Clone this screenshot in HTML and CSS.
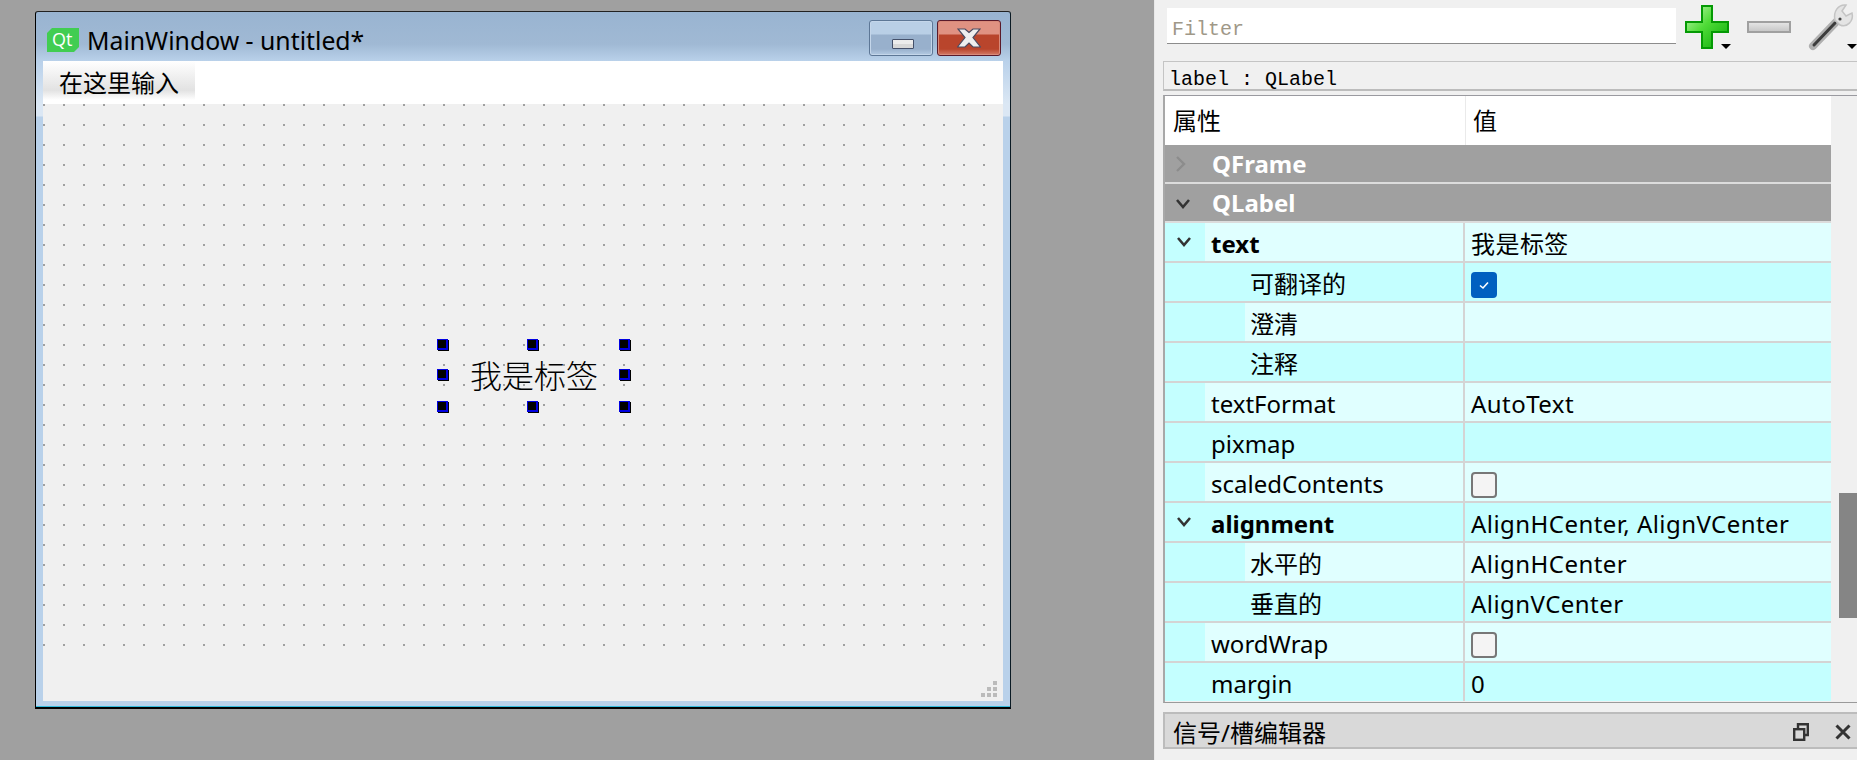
FILE: index.html
```html
<!DOCTYPE html>
<html lang="en">
<head>
    <meta charset="UTF-8">
    <meta name="viewport" content="width=device-width, initial-scale=1.0">
    <title>Qt Designer</title>
    <link rel="stylesheet" href="styles.css">
</head>
<body>

    <!-- Form editor side -->
    <main class="mdi">
        <div class="window">
            <div class="titlebar">
                <svg class="qt-logo" width="32" height="24" viewBox="0 0 32 24">
                    <polygon points="5,0 32,0 32,19 27,24 0,24 0,5" fill="#41cd52"/>
                    <text x="5" y="18" class="qt-text">Qt</text>
                </svg>
                <span class="title">MainWindow - untitled*</span>
                <div class="winbtn min"><span class="min-glyph"></span></div>
                <div class="winbtn close">
                    <svg width="24" height="20" viewBox="0 0 24 20">
                        <polygon points="1,1 8,1 12,4.5 16,1 23,1 16,9.5 23.5,19 16,19 12,15 8,19 0.5,19 8,9.5" fill="#eeeeee" stroke="#4a4a60" stroke-width="1.2"/>
                    </svg>
                </div>
            </div>
            <div class="client">
                <div class="menubar">
                    <div class="menuitem">在这里输入</div>
                </div>
                <div class="canvas">
                    <div class="dots">
                        <div class="label">我是标签</div>
                        <i class="handle h-tl"></i><i class="handle h-tc"></i><i class="handle h-tr"></i>
                        <i class="handle h-ml"></i><i class="handle h-mr"></i>
                        <i class="handle h-bl"></i><i class="handle h-bc"></i><i class="handle h-br"></i>
                    </div>
                    <div class="statusbar">
                        <svg width="16" height="16" viewBox="0 0 16 16" fill="#bbbbbb">
                            <rect x="12" y="0" width="4" height="4"/>
                            <rect x="6" y="6" width="4" height="4"/>
                            <rect x="12" y="6" width="4" height="4"/>
                            <rect x="0" y="12" width="4" height="4"/>
                            <rect x="6" y="12" width="4" height="4"/>
                            <rect x="12" y="12" width="4" height="4"/>
                        </svg>
                    </div>
                </div>
            </div>
        </div>
    </main>

    <!-- Property editor side -->
    <aside class="panel">
        <div class="toolbar">
            <div class="filter">Filter</div>
            <div class="tool tool-plus">
                <svg width="44" height="44" viewBox="0 0 44 44">
                    <defs>
                        <linearGradient id="plusFill" x1="0" y1="0" x2="1" y2="1">
                            <stop offset="0" stop-color="#c8f8b8"/>
                            <stop offset="0.45" stop-color="#50dc38"/>
                            <stop offset="1" stop-color="#08a808"/>
                        </linearGradient>
                    </defs>
                    <polygon points="17,1 27,1 27,17 43,17 43,27 27,27 27,43 17,43 17,27 1,27 1,17 17,17" fill="url(#plusFill)" stroke="#049a04" stroke-width="2"/>
                </svg>
                <i class="drop"></i>
            </div>
            <div class="tool tool-minus"><span class="minus"></span></div>
            <div class="tool tool-wrench">
                <svg width="48" height="48" viewBox="0 0 48 48">
                    <path d="M6 43 L31 17" stroke="#b0b0b0" stroke-width="8" stroke-linecap="round"/>
                    <path d="M7 42 L28 20" stroke="#3c3c3c" stroke-width="3" stroke-linecap="round"/>
                    <path d="M28 17 C26 9 31 1 39 2 L35 8 L39 13 L45 10 C47 18 40 25 33 22 Z" fill="#e4e4e4" stroke="#c4c4c4" stroke-width="1.5"/>
                    <circle cx="33" cy="16" r="1.6" fill="#444"/>
                </svg>
                <i class="drop"></i>
            </div>
        </div>

        <div class="objbar">label : QLabel</div>

        <div class="tablewrap">
            <div class="table">
                <div class="thead">
                    <div class="th-name">属性</div>
                    <div class="th-value">值</div>
                </div>
                <div class="group">
                    <svg class="chev" width="12" height="20" viewBox="0 0 12 20"><path d="M2 3 L9 10 L2 17" fill="none" stroke="#8c8c8c" stroke-width="2.4"/></svg>
                    QFrame
                </div>
                <div class="group">
                    <svg class="chev chev-down" width="16" height="12" viewBox="0 0 16 12"><path d="M2 2 L8 9 L14 2" fill="none" stroke="#333" stroke-width="2.6"/></svg>
                    QLabel
                </div>

                <div class="row light">
                    <div class="indent">
                        <svg width="16" height="12" viewBox="0 0 16 12"><path d="M2 2 L8 9 L14 2" fill="none" stroke="#333" stroke-width="2.6"/></svg>
                    </div>
                    <div class="name bold">text</div>
                    <div class="value">我是标签</div>
                </div>
                <div class="row dark">
                    <div class="indent sub"></div>
                    <div class="name">可翻译的</div>
                    <div class="value">
                        <span class="check on">
                            <svg width="14" height="12" viewBox="0 0 14 12"><path d="M3 6.5 L6 9 L11 3.5" fill="none" stroke="#fff" stroke-width="1.6"/></svg>
                        </span>
                    </div>
                </div>
                <div class="row light">
                    <div class="indent sub"></div>
                    <div class="name">澄清</div>
                    <div class="value"></div>
                </div>
                <div class="row dark">
                    <div class="indent sub"></div>
                    <div class="name">注释</div>
                    <div class="value"></div>
                </div>
                <div class="row light">
                    <div class="indent"></div>
                    <div class="name">textFormat</div>
                    <div class="value">AutoText</div>
                </div>
                <div class="row dark">
                    <div class="indent"></div>
                    <div class="name">pixmap</div>
                    <div class="value"></div>
                </div>
                <div class="row light">
                    <div class="indent"></div>
                    <div class="name">scaledContents</div>
                    <div class="value"><span class="check"></span></div>
                </div>
                <div class="row dark">
                    <div class="indent">
                        <svg width="16" height="12" viewBox="0 0 16 12"><path d="M2 2 L8 9 L14 2" fill="none" stroke="#333" stroke-width="2.6"/></svg>
                    </div>
                    <div class="name bold">alignment</div>
                    <div class="value">AlignHCenter, AlignVCenter</div>
                </div>
                <div class="row light">
                    <div class="indent sub"></div>
                    <div class="name">水平的</div>
                    <div class="value">AlignHCenter</div>
                </div>
                <div class="row dark">
                    <div class="indent sub"></div>
                    <div class="name">垂直的</div>
                    <div class="value">AlignVCenter</div>
                </div>
                <div class="row light">
                    <div class="indent"></div>
                    <div class="name">wordWrap</div>
                    <div class="value"><span class="check"></span></div>
                </div>
                <div class="row dark last">
                    <div class="indent"></div>
                    <div class="name">margin</div>
                    <div class="value">0</div>
                </div>
            </div>
            <div class="scrollbar"><div class="thumb"></div></div>
        </div>

        <div class="dock">
            <span class="dock-title">信号/槽编辑器</span>
            <svg width="16" height="18" viewBox="0 0 16 18" fill="none" stroke="#333" stroke-width="2.4">
                <rect x="1.2" y="6.2" width="10" height="10.6"/>
                <path d="M5 5.5 V1.2 H14.8 V12 H12"/>
            </svg>
            <svg class="dock-close" width="16" height="16" viewBox="0 0 16 16" fill="none" stroke="#333" stroke-width="3">
                <path d="M1.5 1.5 L14.5 14.5 M14.5 1.5 L1.5 14.5"/>
            </svg>
        </div>
    </aside>

</body>
</html>
```
FILE: styles.css
```css
* {
    box-sizing: border-box;
}

body {
    margin: 0;
    width: 1857px;
    height: 760px;
    overflow: hidden;
    display: flex;
    background-color: #a0a0a0;
    font-family: "Noto Sans", "Noto Sans CJK SC", sans-serif;
    color: #000;
}

/* Form window */
.mdi {
    width: 1154px;
    padding: 11px 0 0 35px;
}

.window {
    width: 976px;
    height: 698px;
    padding: 1px 7px 6px 1px;
    border-left: 1px solid #000;
    border-top: 1px solid #222;
    border-right: 1px solid #0a1a24;
    border-bottom: 2px solid #000;
    border-radius: 3px 3px 0 0;
    background: linear-gradient(#99b4d1 0, #a0b9d4 32px, #b9d1ea 49px, #dbe7f4 92px, #dbe7f4 104px, #b9d1ea 105px);
    box-shadow: inset 0 -1px 0 #33bbdd;
    display: flex;
    flex-direction: column;
}

.titlebar {
    height: 48px;
    display: flex;
    align-items: flex-start;
    padding: 15px 0 0 10px;
    flex-shrink: 0;
}

.qt-text {
    font: 18px "Open Sans", sans-serif;
    fill: #fff;
}

.title {
    margin-left: 8px;
    font-size: 24.8px;
    line-height: 24px;
    flex: 1;
}

.winbtn {
    width: 64px;
    height: 36px;
    margin-top: -8px;
    margin-right: 4px;
    border-radius: 3px;
    display: flex;
    align-items: center;
    justify-content: center;
}

.winbtn.min {
    border: 1px solid #5d7796;
    box-shadow: inset 0 0 0 1px #c4d6ea;
    background: linear-gradient(#b9cfe6 0, #b9cfe6 13px, #98b0cc 14px, #98b0cc 28px, #b4cbe3 34px);
}

.winbtn.close {
    margin-right: 2px;
    border: 1px solid #5a1a2a;
    box-shadow: inset 0 0 0 1px #d88a7a;
    background: linear-gradient(#e09282 0, #e09282 13px, #b9452c 14px, #b9452c 28px, #d47a66 34px);
}

.min-glyph {
    width: 22px;
    height: 10px;
    margin-top: 11px;
    margin-left: 3px;
    border: 1px solid #44506a;
    border-radius: 1px;
    background: linear-gradient(#ececec 50%, #d8d8d8 50%);
}

.client {
    flex: 1;
    margin-left: 6px;
    display: flex;
    flex-direction: column;
    min-height: 0;
}

.menubar {
    height: 43px;
    background-color: #fff;
}

.menuitem {
    width: 152px;
    height: 39px;
    padding-left: 16px;
    font-size: 24px;
    line-height: 43px;
    background: linear-gradient(#fff 0, #e2e2e2 75%, #fff 100%);
}

.canvas {
    flex: 1;
    display: flex;
    flex-direction: column;
    background-color: #f0f0f0;
}

.dots {
    position: relative;
    height: 543px;
    background: conic-gradient(from 270deg at 2px 2px, #a0a0a0 90deg, #f0f0f0 0) 0 0 / 20px 20px;
}

.statusbar {
    flex: 1;
    display: flex;
    justify-content: flex-end;
    align-items: flex-end;
    padding: 0 6px 4px 0;
}

/* The label sits on the form canvas */
.label {
    position: absolute;
    left: 400px;
    top: 241px;
    width: 182px;
    height: 62px;
    text-align: center;
    font-size: 32px;
    font-weight: 300;
    line-height: 62px;
}

.handle {
    position: absolute;
    width: 11px;
    height: 11px;
    background-color: #000;
    border: solid #0000e0;
    border-width: 1px 2px 2px 1px;
    box-shadow: 1px 1px 0 #000;
}

.h-tl { left: 394px; top: 235px; }
.h-tc { left: 484px; top: 235px; }
.h-tr { left: 576px; top: 235px; }
.h-ml { left: 394px; top: 265px; }
.h-mr { left: 576px; top: 265px; }
.h-bl { left: 394px; top: 297px; }
.h-bc { left: 484px; top: 297px; }
.h-br { left: 576px; top: 297px; }

/* Property editor */
.panel {
    width: 703px;
    height: 760px;
    padding-left: 8px;
    border-left: 1px solid #e8e8e8;
    background-color: #f0f0f0;
    display: flex;
    flex-direction: column;
}

.toolbar {
    height: 61px;
    display: flex;
}

.filter {
    width: 509px;
    height: 36px;
    margin: 8px 0 0 4px;
    padding-left: 5px;
    background-color: #fff;
    border-bottom: 1px solid #8c8c8c;
    font-family: "Liberation Mono", monospace;
    font-size: 20px;
    line-height: 44px;
    color: #a09888;
}

.tool {
    position: relative;
}

.tool-plus {
    margin: 5px 0 0 9px;
    width: 44px;
}

.tool-minus {
    margin: 21px 0 0 18px;
}

.minus {
    display: block;
    width: 44px;
    height: 12px;
    border: 2px solid #a0a0a0;
    background: linear-gradient(#e4e4e4, #c8c8c8);
}

.tool-wrench {
    margin: 3px 0 0 16px;
}

.drop {
    position: absolute;
    right: -2px;
    top: 39px;
    width: 0;
    height: 0;
    border-left: 5px solid transparent;
    border-right: 5px solid transparent;
    border-top: 5px solid #000;
}

.tool-wrench .drop {
    right: -2px;
    top: 41px;
}

.objbar {
    height: 30px;
    padding-left: 5px;
    border: 1px solid #c4c4c4;
    border-right: 0;
    border-bottom: 2px solid #bcbcbc;
    font-family: "Liberation Mono", monospace;
    font-size: 20px;
    line-height: 35px;
}

.tablewrap {
    margin-top: 4px;
    height: 608px;
    display: flex;
    border-top: 1px solid #9a9aa0;
    border-bottom: 1px solid #9a9a9a;
    border-left: 2px solid #a8a8a8;
}

.table {
    width: 666px;
    display: flex;
    flex-direction: column;
    font-size: 24px;
}

.thead {
    height: 49px;
    display: flex;
    background-color: #fff;
    line-height: 50px;
}

.th-name {
    width: 301px;
    padding-left: 8px;
    border-right: 1px solid #eaeaea;
}

.th-value {
    padding-left: 7px;
}

.group {
    height: 39px;
    display: flex;
    align-items: center;
    border-bottom: 2px solid #dcdcdc;
    background-color: #a0a0a0;
    color: #fff;
    font-weight: 700;
    position: relative;
    padding-left: 47px;
}

.chev {
    position: absolute;
    left: 10px;
    top: 9px;
}

.chev-down {
    top: 14px;
}

.row {
    height: 40px;
    display: flex;
    border-bottom: 2px solid #d4d4d4;
    line-height: 42px;
}

.row.last {
    height: 38px;
    border-bottom: 0;
}

.dark {
    background-color: #c4ffff;
}

.light {
    background-color: #e0ffff;
}

.indent {
    width: 40px;
    flex-shrink: 0;
    background-color: #c4ffff;
    padding: 13px 0 0 11px;
}

.indent svg {
    display: block;
}

.indent.sub {
    width: 80px;
}

.name {
    width: 258px;
    padding-left: 6px;
}

.indent.sub + .name {
    width: 218px;
    padding-left: 5px;
}

.bold {
    font-weight: 700;
}

.value {
    flex: 1;
    padding-left: 6px;
    border-left: 2px solid #d4d4d4;
    letter-spacing: 0.45px;
}

.check {
    display: block;
    width: 26px;
    height: 26px;
    margin-top: 9px;
    border: 2px solid #777;
    border-radius: 4px;
    background-color: #f4f4f4;
}

.check.on {
    border: 0;
    background-color: #0060c0;
    display: flex;
    align-items: center;
    justify-content: center;
}

.scrollbar {
    flex: 1;
    padding: 397px 0 0 8px;
}

.thumb {
    height: 125px;
    background-color: #858585;
}

.dock {
    height: 37px;
    margin-top: 9px;
    display: flex;
    align-items: center;
    padding: 2px 6px 0 8px;
    background-color: #d9d9d9;
    border: 2px solid #bcbcbc;
    border-right: 0;
    font-size: 24px;
}

.dock-title {
    flex: 1;
}

.dock-close {
    margin-left: 26px;
}
```
